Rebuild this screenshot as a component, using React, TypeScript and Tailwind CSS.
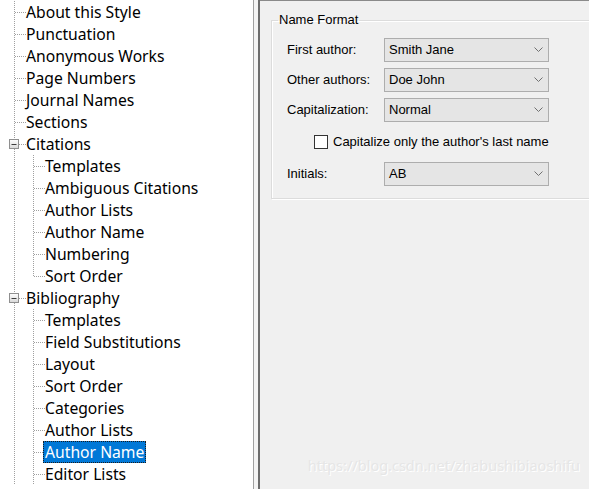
import React from 'react';

type Node = { label: string; level: 0 | 1; expander?: boolean; last?: boolean; selected?: boolean };

const nodes: Node[] = [
  { label: 'About this Style', level: 0 },
  { label: 'Punctuation', level: 0 },
  { label: 'Anonymous Works', level: 0 },
  { label: 'Page Numbers', level: 0 },
  { label: 'Journal Names', level: 0 },
  { label: 'Sections', level: 0 },
  { label: 'Citations', level: 0, expander: true },
  { label: 'Templates', level: 1 },
  { label: 'Ambiguous Citations', level: 1 },
  { label: 'Author Lists', level: 1 },
  { label: 'Author Name', level: 1 },
  { label: 'Numbering', level: 1 },
  { label: 'Sort Order', level: 1, last: true },
  { label: 'Bibliography', level: 0, expander: true },
  { label: 'Templates', level: 1 },
  { label: 'Field Substitutions', level: 1 },
  { label: 'Layout', level: 1 },
  { label: 'Sort Order', level: 1 },
  { label: 'Categories', level: 1 },
  { label: 'Author Lists', level: 1 },
  { label: 'Author Name', level: 1, selected: true },
  { label: 'Editor Lists', level: 1 },
];

const dot = { stroke: '#a0a0a0', strokeWidth: 1, strokeDasharray: '1 1' };

const RootCell = ({ own, expander }: { own: boolean; expander?: boolean }) => (
  <svg width="26" height="22" className="shrink-0">
    <line x1="14.5" y1="0" x2="14.5" y2="22" {...dot} />
    {own && <line x1="15" y1="11.5" x2="26" y2="11.5" {...dot} />}
    {expander && (
      <>
        <defs>
          <linearGradient id="exp" x1="0" y1="0" x2="0" y2="1">
            <stop offset="0" stopColor="#ffffff" />
            <stop offset="1" stopColor="#d8d8d8" />
          </linearGradient>
        </defs>
        <rect x="9.5" y="6.5" width="9" height="9" fill="url(#exp)" stroke="#8f8f8f" />
        <line x1="11.5" y1="11.5" x2="16.5" y2="11.5" stroke="#3c3c3c" />
      </>
    )}
  </svg>
);

const ChildCell = ({ last }: { last?: boolean }) => (
  <svg width="19" height="22" className="shrink-0">
    <line x1="7.5" y1="0" x2="7.5" y2={last ? 12 : 22} {...dot} />
    <line x1="8" y1="11.5" x2="19" y2="11.5" {...dot} />
  </svg>
);

const Select = ({ value }: { value: string }) => (
  <div className="w-[165px] h-[24px] flex items-center justify-between bg-[#e5e5e5] border border-[#adadad] pl-[4px] pr-[5px]">
    <span>{value}</span>
    <svg width="9" height="6" viewBox="0 0 9 6">
      <path d="M0.5 0.5 L4.5 4.5 L8.5 0.5" fill="none" stroke="#707070" strokeWidth="1" />
    </svg>
  </div>
);

const Row = ({ label, value }: { label: string; value: string }) => (
  <div className="flex items-center">
    <span className="w-[97px] shrink-0">{label}</span>
    <Select value={value} />
  </div>
);

export default function App() {
  return (
    <div className="flex w-[589px] h-[489px] overflow-hidden bg-[#f0f0f0]">
      <div className="w-[253px] shrink-0 bg-white pt-[1px] overflow-hidden font-['Noto_Sans',sans-serif] text-[15.7px] text-black">
        {nodes.map((n, i) => (
          <div key={i} className="flex h-[22px] items-center">
            <RootCell own={n.level === 0} expander={n.expander} />
            {n.level === 1 && <ChildCell last={n.last} />}
            <span
              className={`leading-[22px] h-[22px] whitespace-nowrap ${
                n.selected ? 'bg-[#0078d7] text-white outline outline-1 outline-dotted outline-[#1c1c1c] -outline-offset-1 -ml-[2px] px-[2px]' : ''
              }`}
            >
              {n.label}
            </span>
          </div>
        ))}
      </div>
      <div className="w-px shrink-0 bg-[#a0a0a0]" />
      <div className="w-[4px] shrink-0 bg-[#f4f4f4]" />
      <div className="w-[2px] shrink-0 bg-[#6d6d6d]" />
      <div className="flex-1 flex flex-col overflow-hidden border-t border-[#8a8a8a] pl-[11px] pt-[12px] font-['Liberation_Sans',sans-serif] text-[13px] text-black">
        <fieldset className="w-[340px] shrink-0 border border-[#dcdcdc] shadow-[inset_1px_1px_0_#ffffff,1px_1px_0_#ffffff] pb-[12px]">
          <legend className="ml-[6px] px-[1px] leading-[14px]">Name Format</legend>
          <div className="pl-[15px]">
            <div className="mt-[11px] flex flex-col gap-[6px]">
              <Row label="First author:" value="Smith Jane" />
              <Row label="Other authors:" value="Doe John" />
              <Row label="Capitalization:" value="Normal" />
            </div>
            <div className="mt-[13px] flex items-center h-[14px] pl-[27px]">
              <span className="w-[14px] h-[14px] bg-white border border-[#333333] shrink-0" />
              <span className="ml-[5px]">Capitalize only the author's last name</span>
            </div>
            <div className="mt-[13px]">
              <Row label="Initials:" value="AB" />
            </div>
          </div>
        </fieldset>
        <div className="mt-auto pb-[12px] pr-[9px] text-right font-['Noto_Sans',sans-serif] text-[14.5px] text-[#e6e6e6] [text-shadow:1px_1px_0_#ffffff]">
          https://blog.csdn.net/zhabushibiaoshifu
        </div>
      </div>
    </div>
  );
}
